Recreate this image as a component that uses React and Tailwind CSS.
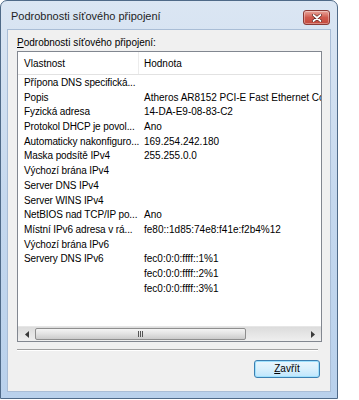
import React from 'react';

const rows = [
  ['Přípona DNS specifická...', ''],
  ['Popis', 'Atheros AR8152 PCI-E Fast Ethernet Controller (NDIS 6.20)'],
  ['Fyzická adresa', '14-DA-E9-08-83-C2'],
  ['Protokol DHCP je povol...', 'Ano'],
  ['Automaticky nakonfiguro...', '169.254.242.180'],
  ['Maska podsítě IPv4', '255.255.0.0'],
  ['Výchozí brána IPv4', ''],
  ['Server DNS IPv4', ''],
  ['Server WINS IPv4', ''],
  ['NetBIOS nad TCP/IP po...', 'Ano'],
  ['Místní IPv6 adresa v rá...', 'fe80::1d85:74e8:f41e:f2b4%12'],
  ['Výchozí brána IPv6', ''],
  ['Servery DNS IPv6', 'fec0:0:0:ffff::1%1'],
  ['', 'fec0:0:0:ffff::2%1'],
  ['', 'fec0:0:0:ffff::3%1'],
];

function CloseButton(){
  return (
    <div className="w-[27px] h-[15px] rounded-[3px] border border-[#8a3a36] bg-gradient-to-b from-[#e8a59c] via-[#cf5a4e] to-[#c4483c] flex items-center justify-center shadow-[inset_0_0_0_1px_rgba(255,255,255,0.35)]">
      <svg width="10" height="8" viewBox="0 0 10 8">
        <path d="M1.5 1 L8.5 7 M8.5 1 L1.5 7" stroke="#5a2420" strokeWidth="3" strokeLinecap="round" />
        <path d="M1.5 1 L8.5 7 M8.5 1 L1.5 7" stroke="#ffffff" strokeWidth="1.7" strokeLinecap="round" />
      </svg>
    </div>
  );
}

function HScrollbar(){
  return (
    <div className="h-[15px] flex items-stretch bg-gradient-to-b from-[#dcdcdc] to-[#efefef] border-t border-[#e6e6e6]">
      <div className="w-[17px] flex items-center justify-center">
        <svg width="4" height="7" viewBox="0 0 4 7"><path d="M4 0 L0 3.5 L4 7 Z" fill="#3a3a3a" /></svg>
      </div>
      <div className="w-[211px] my-[1px] rounded-[2px] border border-[#8e8e8e] bg-gradient-to-b from-[#f4f4f4] via-[#e2e2e2] to-[#cbcbcb] flex items-center justify-center">
        <div className="flex gap-[1px]">
          <div className="w-[1px] h-[6px] bg-[#555]" />
          <div className="w-[1px] h-[6px] bg-[#555]" />
          <div className="w-[1px] h-[6px] bg-[#555]" />
        </div>
      </div>
      <div className="flex-1" />
      <div className="w-[17px] flex items-center justify-center">
        <svg width="4" height="7" viewBox="0 0 4 7"><path d="M0 0 L4 3.5 L0 7 Z" fill="#3a3a3a" /></svg>
      </div>
    </div>
  );
}

export default function App(){
  return (
    <div className="w-[359px] h-[400px] bg-white font-['Liberation_Sans',Arial,sans-serif] text-black">
      <div className="w-[338px] h-[399px] rounded-t-[7px] border border-[#4f6a88] bg-gradient-to-b from-[#dbe6f3] via-[#c5d8ee] to-[#b9d1ec] flex flex-col px-[6px] pb-[6px]">
        {/* title bar */}
        <div className="h-[28px] flex items-start justify-between">
          <div className="pt-[9px] pl-[4px] text-[11px] leading-[13px] text-[#1e1e1e]">Podrobnosti síťového připojení</div>
          <div className="pt-[9px] pr-[1px]"><CloseButton /></div>
        </div>

        {/* client area */}
        <div className="flex-1 bg-[#f0f0f0] border border-[#a9bdd6] flex flex-col px-[9px]">
          <div className="pt-[7px] h-[21px] text-[10px] leading-[12px]">
            <span className="underline">P</span>odrobnosti síťového připojení:
          </div>

          <div className="w-[305px] h-[291px] border border-[#828790] bg-white flex flex-col">
            <div className="h-[23px] flex items-center border-b border-[#e2e2e2] text-[10px]">
              <div className="w-[121px] pl-[6px] h-full flex items-center border-r border-[#ececec]">Vlastnost</div>
              <div className="pl-[5px]">Hodnota</div>
            </div>
            <div className="flex-1 pt-[1px] overflow-hidden">
              {rows.map((r, i) => (
                <div key={i} className="h-[14.7px] flex items-center text-[10px] leading-[14.7px] whitespace-nowrap">
                  <div className="w-[121px] pl-[6px] shrink-0 tracking-[-0.1px]">{r[0]}</div>
                  <div className="pl-[5px] flex-1 overflow-hidden">{r[1]}</div>
                </div>
              ))}
            </div>
            <HScrollbar />
          </div>

          <div className="mt-[7px] w-[301px] h-[2px] border-t border-[#a0a0a0] border-b border-b-white" />

          <div className="mt-[9px] flex justify-end pr-[1px]">
            <button className="w-[66px] h-[18px] rounded-[3px] border border-[#3c7fb1] bg-gradient-to-b from-[#eaf6fd] via-[#d9f0fc] to-[#bee6fd] shadow-[inset_0_0_0_1px_#9fe1fd] text-[10px] leading-[12px]">
              <span className="underline">Z</span>avřít
            </button>
          </div>
        </div>
      </div>
    </div>
  );
}
